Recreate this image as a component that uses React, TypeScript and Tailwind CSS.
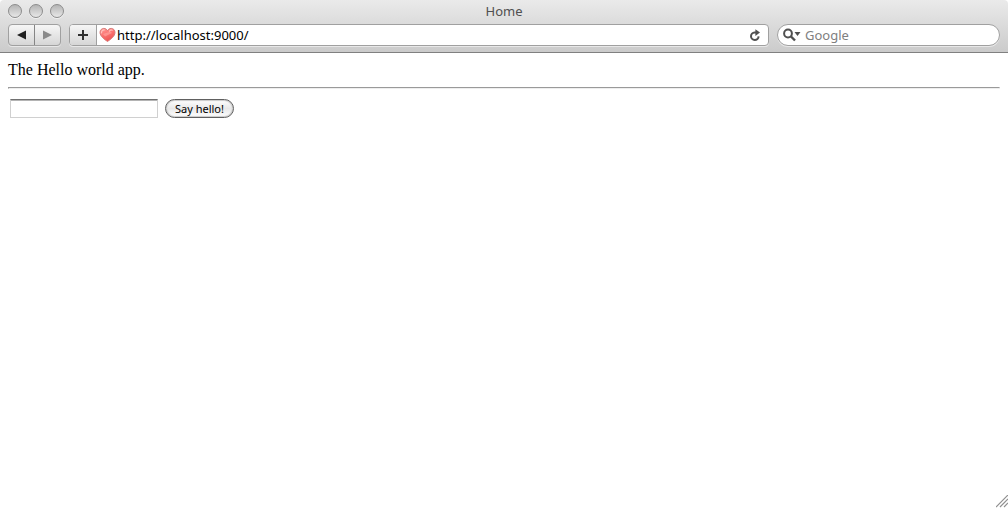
import { useState } from 'react';
import type { FormEvent } from 'react';

const windowButtons = ['Close', 'Minimize', 'Zoom'];

function HeartIcon() {
  return (
    <svg width="17" height="16" viewBox="0 0 17 16" className="shrink-0" aria-hidden="true">
      <defs>
        <linearGradient id="heart" x1="0" y1="0" x2="0.5" y2="1">
          <stop offset="0" stopColor="#ffa09b" />
          <stop offset="0.5" stopColor="#fc7472" />
          <stop offset="1" stopColor="#ee5554" />
        </linearGradient>
      </defs>
      <path
        d="M8.5 14.5C5.5 12.4 1 9.2 1 5.4C1 3 2.7 1.4 4.8 1.4C6.4 1.4 7.8 2.3 8.5 3.7C9.2 2.3 10.6 1.4 12.2 1.4C14.3 1.4 16 3 16 5.4C16 9.2 11.5 12.4 8.5 14.5Z"
        fill="url(#heart)"
        stroke="#d67c7a"
      />
      <path d="M2.5 5.8C2.4 3.8 3.8 2.8 5.2 2.9M10.4 4.2C11 3.1 12.2 2.7 13.2 3.2" fill="none" stroke="#ffc4c0" strokeWidth="1.2" strokeLinecap="round" />
      <path d="M4 7L11.5 4.5L13 6L6 9.5Z" fill="#ffb5b0" opacity="0.5" />
    </svg>
  );
}

function ReloadIcon() {
  return (
    <svg width="12" height="13" viewBox="0 0 12 13" aria-hidden="true">
      <path d="M7.5 3.4H5.6A3.8 3.8 0 1 0 9.6 7.4" fill="none" stroke="#505050" strokeWidth="2" />
      <path d="M6.4 0.2L11 3.6L6.4 7Z" fill="#505050" />
    </svg>
  );
}

function SearchIcon() {
  return (
    <svg width="18" height="14" viewBox="0 0 18 14" className="shrink-0" aria-hidden="true">
      <circle cx="5" cy="5.5" r="3.9" fill="none" stroke="#505050" strokeWidth="2" />
      <path d="M8 8.5L12 12.5" stroke="#505050" strokeWidth="2.4" />
      <path d="M11.5 4H17.5L14.5 8Z" fill="#505050" />
    </svg>
  );
}

function Toolbar() {
  const [url, setUrl] = useState('http://localhost:9000/');
  const [query, setQuery] = useState('');

  return (
    <div className="flex h-[22px] items-stretch gap-2 px-2">
      <div className="flex w-[53px] shrink-0 overflow-hidden rounded border border-[#a0a0a0] bg-linear-to-b from-[#f6f6f6] to-[#d6d6d6] shadow-[0_1px_0_#e8e8e8]">
        <button type="button" aria-label="Back" className="flex flex-1 items-center justify-center border-r border-[#858585]">
          <svg width="9" height="10" viewBox="0 0 9 10" aria-hidden="true">
            <path d="M9 0.5V9.5L0 5Z" fill="#202020" />
          </svg>
        </button>
        <button type="button" aria-label="Forward" className="flex flex-1 items-center justify-center">
          <svg width="9" height="10" viewBox="0 0 9 10" aria-hidden="true">
            <path d="M0 0.5V9.5L9 5Z" fill="#8a8a8a" />
          </svg>
        </button>
      </div>
      <div className="flex min-w-0 flex-1 overflow-hidden rounded border border-[#a0a0a0] bg-white shadow-[0_1px_0_#e8e8e8]">
        <button
          type="button"
          aria-label="Add bookmark"
          className="flex w-[27px] shrink-0 items-center justify-center border-r border-[#a0a0a0] bg-linear-to-b from-[#f6f6f6] to-[#d6d6d6]"
        >
          <svg width="12" height="12" viewBox="0 0 12 12" aria-hidden="true">
            <path d="M6 1V11M1 6H11" stroke="#303030" strokeWidth="2" />
          </svg>
        </button>
        <div className="flex min-w-0 flex-1 items-center pr-[7px] pl-0.5">
          <HeartIcon />
          <input
            type="text"
            aria-label="Address"
            value={url}
            onChange={(e) => setUrl(e.target.value)}
            className="min-w-0 flex-1 pl-px text-[13px] leading-5 text-black outline-none"
          />
          <button type="button" aria-label="Reload">
            <ReloadIcon />
          </button>
        </div>
      </div>
      <label className="flex w-[223px] shrink-0 items-center gap-1 rounded-full border border-[#a0a0a0] bg-white pr-3 pl-[5px] shadow-[0_1px_0_#e8e8e8]">
        <SearchIcon />
        <input
          type="text"
          aria-label="Search"
          placeholder="Google"
          value={query}
          onChange={(e) => setQuery(e.target.value)}
          className="min-w-0 flex-1 text-[13px] leading-5 text-[#404040] outline-none placeholder:text-[#808080]"
        />
      </label>
    </div>
  );
}

export default function App() {
  const [name, setName] = useState('');

  const sayHello = (e: FormEvent) => {
    e.preventDefault();
  };

  return (
    <div className="flex min-h-screen flex-col bg-white font-['Noto_Sans','Open_Sans',sans-serif]">
      <header className="rounded-t border-b border-[#808080] bg-linear-to-b from-[#eaeaea] to-[#cbcbcb] pb-1.5">
        <div className="grid h-6 grid-cols-[1fr_auto_1fr] items-center px-2 pb-0.5">
          <div className="flex gap-[7px]">
            {windowButtons.map((label) => (
              <button
                key={label}
                type="button"
                aria-label={label}
                className="size-3.5 rounded-full border border-[#8c8c8c] bg-linear-to-b from-[#b4b4b4] to-[#e8e8e8] shadow-[0_1px_0_#f0f0f0]"
              />
            ))}
          </div>
          <h1 className="text-[13px] leading-5 text-[#505050]">Home</h1>
        </div>
        <Toolbar />
      </header>

      <main className="flex-1 px-2 pt-2">
        <p className="font-['Liberation_Serif',serif] text-base leading-[18px] text-black">The Hello world app.</p>
        <hr className="mt-2 h-0.5 border border-t-[#9a9a9a] border-r-[#eeeeee] border-b-[#eeeeee] border-l-[#9a9a9a]" />
        <form onSubmit={sayHello} className="mt-2.5 flex items-center gap-[7px] pl-0.5">
          <input
            type="text"
            aria-label="Name"
            value={name}
            onChange={(e) => setName(e.target.value)}
            className="h-[19px] w-[148px] border border-[#d0d0d0] border-t-[#707070] px-1 text-[11px] shadow-[inset_0_1px_0_#b4b4b4] outline-none"
          />
          <button
            type="submit"
            className="h-[19px] w-[69px] rounded-full border border-[#606060] bg-linear-to-b from-white via-[#e8e8e8] to-white text-[11px] leading-4 whitespace-nowrap text-black shadow-[inset_0_0_1px_1px_#c8c8c8]"
          >
            Say hello!
          </button>
        </form>
      </main>

      <footer className="flex justify-end">
        <svg width="12" height="13" viewBox="0 0 12 13" aria-hidden="true">
          <path d="M0 12L12 0M4 12L12 4M8 12L12 8" stroke="#909090" strokeWidth="1.2" />
        </svg>
      </footer>
    </div>
  );
}
